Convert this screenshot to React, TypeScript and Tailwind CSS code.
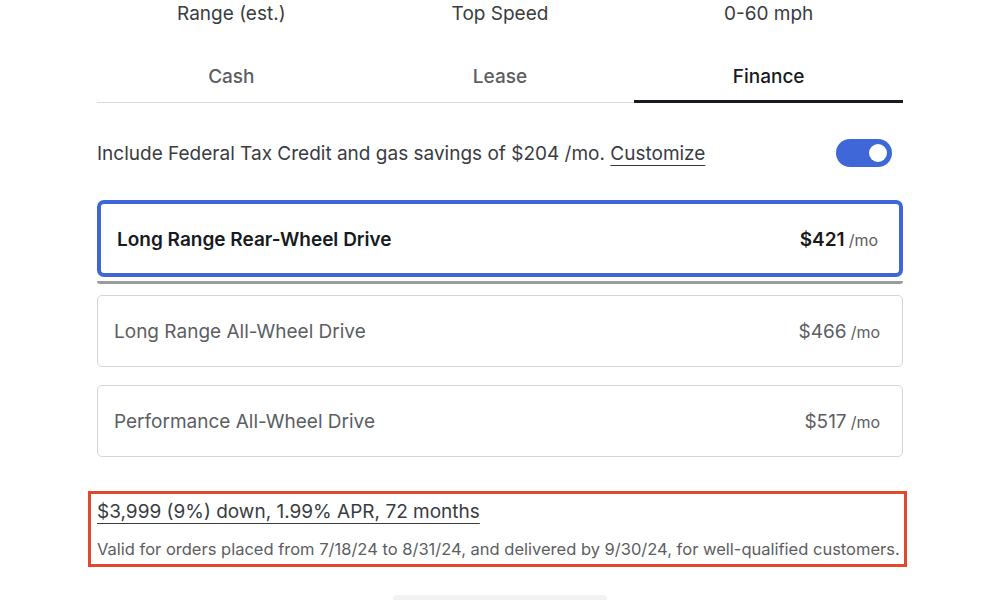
import * as React from "react"

const trims = [
  { name: "Long Range Rear-Wheel Drive", price: "$421", selected: true },
  { name: "Long Range All-Wheel Drive", price: "$466", selected: false },
  { name: "Performance All-Wheel Drive", price: "$517", selected: false },
]

export default function App() {
  const [tab, setTab] = React.useState("Finance")
  const [includeCredit, setIncludeCredit] = React.useState(true)

  return (
    <div className="relative h-[600px] w-[1000px] overflow-hidden bg-white font-['Inter',sans-serif] text-[#393c41]">
      <div className="mx-auto w-[806px]">
        {/* spec labels */}
        <div className="grid h-[27px] grid-cols-3 items-center text-[19px]">
          <div className="text-center">Range (est.)</div>
          <div className="text-center">Top Speed</div>
          <div className="text-center">0-60 mph</div>
        </div>

        {/* payment tabs */}
        <div className="mt-[33px] grid grid-cols-3 border-b border-[#dcdcdc]">
          {["Cash", "Lease", "Finance"].map((t) => (
            <button
              key={t}
              onClick={() => setTab(t)}
              className={
                tab === t
                  ? "-mb-px h-[43px] border-b-[3px] border-[#171a20] pb-[6px] text-[19px] font-medium text-[#171a20]"
                  : "-mb-px h-[43px] border-b-[3px] border-transparent pb-[6px] text-[19px] font-medium text-[#5c5e62]"
              }
            >
              {t}
            </button>
          ))}
        </div>

        {/* tax credit toggle */}
        <div className="mt-[37px] flex h-[28px] items-center justify-between">
          <p className="text-[19px]">
            Include Federal Tax Credit and gas savings of $204 /mo.{" "}
            <span className="underline decoration-1 underline-offset-[5px]">Customize</span>
          </p>
          <button
            onClick={() => setIncludeCredit(!includeCredit)}
            className={
              includeCredit
                ? "mr-[11px] -mt-[3px] flex h-[28px] w-[56px] items-center justify-end rounded-full bg-[#3f67d8] px-[5px]"
                : "mr-[11px] -mt-[3px] flex h-[28px] w-[56px] items-center justify-start rounded-full bg-[#c7c7c7] px-[5px]"
            }
          >
            <span className="h-[18px] w-[18px] rounded-full bg-white" />
          </button>
        </div>

        {/* trims */}
        <div className="mt-[32px] flex flex-col">
          {trims.map((trim) =>
            trim.selected ? (
              <div key={trim.name} className="mb-[11px]">
                <div className="flex h-[77px] items-center justify-between rounded-[7px] border-4 border-[#3e66d6] pl-[16px] pr-[21px] pt-[4px]">
                  <span className="text-[19px] font-semibold text-[#171a20]">{trim.name}</span>
                  <span className="text-[19px] font-semibold text-[#171a20]">
                    {trim.price}
                    <span className="ml-[4px] text-[16px] font-normal text-[#5c5e62]">/mo</span>
                  </span>
                </div>
                <div className="mt-[4px] h-[3px] rounded-b-[3px] bg-[#9b9b9b]" />
              </div>
            ) : (
              <div
                key={trim.name}
                className="mb-[18px] flex h-[72px] items-center justify-between rounded-[5px] border border-[#d4d5d6] pl-[16px] pr-[22px] pt-[3px] text-[#5c5e62]"
              >
                <span className="text-[19px]">{trim.name}</span>
                <span className="text-[19px]">
                  {trim.price}
                  <span className="ml-[4px] text-[16px]">/mo</span>
                </span>
              </div>
            )
          )}
        </div>
      </div>

      {/* financing terms */}
      <div className="ml-[88px] mt-[16px] w-[819px] border-[3px] border-[#e0492e] pb-[3px] pl-[6px] pt-[4px]">
        <p className="text-[19px] underline decoration-1 underline-offset-[5px]">
          $3,999 (9%) down, 1.99% APR, 72 months
        </p>
        <p className="mt-[10px] text-[16.5px] text-[#5c5e62]">
          Valid for orders placed from 7/18/24 to 8/31/24, and delivered by 9/30/24, for well-qualified customers.
        </p>
      </div>

      <div className="absolute bottom-0 left-[393px] h-[5px] w-[214px] rounded-t-[4px] bg-[#f2f2f2]" />
    </div>
  )
}
